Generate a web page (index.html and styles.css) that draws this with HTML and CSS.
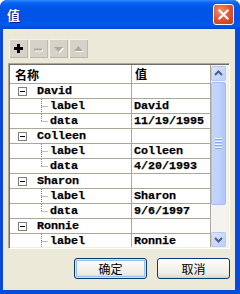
FILE: index.html
```html
<!DOCTYPE html>
<html>
<head>
<meta charset="utf-8">
<link rel="stylesheet" href="styles.css">
</head>
<body>
<div class="window">
  <div class="titlebar">
    <span class="title">值</span>
    <div class="close">
      <svg width="21" height="21" viewBox="0 0 21 21"><path d="M6 6 L15 15 M15 6 L6 15" stroke="#fff" stroke-width="2.4" stroke-linecap="square"/></svg>
    </div>
  </div>
  <div class="body">
    <div class="toolbar">
      <div class="tbtn"><svg width="19" height="19" viewBox="0 0 19 19"><path d="M5 9.5 H14 M9.5 5 V14" stroke="#000" stroke-width="3"/></svg></div>
      <div class="tbtn"><svg width="19" height="19" viewBox="0 0 19 19"><path d="M6 11.5 H14" stroke="#fff" stroke-width="2"/><path d="M5 10.5 H13" stroke="#ACA899" stroke-width="2"/></svg></div>
      <div class="tbtn"><svg width="19" height="19" viewBox="0 0 19 19"><path d="M6 9 L15 9 L10.5 14 Z" fill="#fff"/><path d="M5 8 L14 8 L9.5 13 Z" fill="#ACA899"/></svg></div>
      <div class="tbtn"><svg width="19" height="19" viewBox="0 0 19 19"><path d="M6 13 L15 13 L10.5 8 Z" fill="#fff"/><path d="M5 12 L14 12 L9.5 7 Z" fill="#ACA899"/></svg></div>
    </div>
    <div class="table">
      <div class="grid">
        <div class="row head"><div class="c1">名称</div><div class="c2">值</div></div>
        <div class="row"><div class="c1"><span class="box"></span>David</div><div class="c2"></div></div>
        <div class="row child"><div class="c1"><svg class="tree" width="8" height="14"><path d="M0.5 0 V14 M0.5 7.5 H7" stroke="#808080" stroke-dasharray="1 1"/></svg>label</div><div class="c2">David</div></div>
        <div class="row child"><div class="c1"><svg class="tree" width="8" height="14"><path d="M0.5 0 V7 M0.5 7.5 H7" stroke="#808080" stroke-dasharray="1 1"/></svg>data</div><div class="c2">11/19/1995</div></div>
        <div class="row"><div class="c1"><span class="box"></span>Colleen</div><div class="c2"></div></div>
        <div class="row child"><div class="c1"><svg class="tree" width="8" height="14"><path d="M0.5 0 V14 M0.5 7.5 H7" stroke="#808080" stroke-dasharray="1 1"/></svg>label</div><div class="c2">Colleen</div></div>
        <div class="row child"><div class="c1"><svg class="tree" width="8" height="14"><path d="M0.5 0 V7 M0.5 7.5 H7" stroke="#808080" stroke-dasharray="1 1"/></svg>data</div><div class="c2">4/20/1993</div></div>
        <div class="row"><div class="c1"><span class="box"></span>Sharon</div><div class="c2"></div></div>
        <div class="row child"><div class="c1"><svg class="tree" width="8" height="14"><path d="M0.5 0 V14 M0.5 7.5 H7" stroke="#808080" stroke-dasharray="1 1"/></svg>label</div><div class="c2">Sharon</div></div>
        <div class="row child"><div class="c1"><svg class="tree" width="8" height="14"><path d="M0.5 0 V7 M0.5 7.5 H7" stroke="#808080" stroke-dasharray="1 1"/></svg>data</div><div class="c2">9/6/1997</div></div>
        <div class="row"><div class="c1"><span class="box"></span>Ronnie</div><div class="c2"></div></div>
        <div class="row child"><div class="c1"><svg class="tree" width="8" height="14"><path d="M0.5 0 V14 M0.5 7.5 H7" stroke="#808080" stroke-dasharray="1 1"/></svg>label</div><div class="c2">Ronnie</div></div>
      </div>
      <div class="scrollbar">
        <div class="sbtn"><svg width="15" height="15" viewBox="0 0 15 15"><path d="M4 9 L7.5 5.5 L11 9" stroke="#4D6185" stroke-width="2" fill="none"/></svg></div>
        <div class="thumb"><span class="grip"></span><span class="grip"></span><span class="grip"></span><span class="grip"></span></div>
        <div class="track"></div>
        <div class="sbtn"><svg width="15" height="15" viewBox="0 0 15 15"><path d="M4 6 L7.5 9.5 L11 6" stroke="#4D6185" stroke-width="2" fill="none"/></svg></div>
      </div>
    </div>
    <div class="buttons">
      <div class="btn default"><span>确定</span></div>
      <div class="btn"><span>取消</span></div>
    </div>
  </div>
</div>
</body>
</html>
```
FILE: styles.css
```css
html, body { margin: 0; padding: 0; background: #fff; }
.window {
  width: 240px; height: 294px;
  background: #0A4ADB;
  border-radius: 7px 7px 0 0;
  display: flex; flex-direction: column;
  box-sizing: border-box;
  overflow: hidden;
}
.titlebar {
  height: 29px; flex: none;
  background: linear-gradient(to bottom, #2E8BFF 0px, #0A62F0 3px, #0055E8 8px, #0053E6 18px, #0059EE 25px, #0046D5 29px);
  display: flex; align-items: center;
  padding-left: 7px; padding-right: 5px;
}
.title {
  color: #fff; font: bold 13px "Noto Sans CJK SC", sans-serif;
  text-shadow: 1px 1px 0 #0A1883;
  flex: 1; margin-top: -1px;
}
.close {
  width: 19px; height: 19px;
  border: 1px solid #fff; border-radius: 3px;
  background: radial-gradient(circle at 35% 30%, #F3906E, #E0502E 55%, #C53A17);
  display: flex; align-items: center; justify-content: center;
  margin-top: -1px; margin-right: 1px;
}
.close svg { display: block; width: 19px; height: 19px; }
.body {
  flex: 1;
  margin: 0 5px 4px 3px;
  background: #ECE9D8;
  padding: 10px 5px 0 5px;
  display: flex; flex-direction: column;
}
.toolbar { display: flex; gap: 1px; margin-left: 1px; height: 19px; }
.tbtn {
  width: 19px; height: 19px;
  background: #D6D2CA;
  box-shadow: inset 1px 1px 0 #F4F2EC, inset -1px -1px 0 #BDB8AC;
}
.tbtn svg { display: block; }
.table {
  margin-top: 5px;
  height: 186px; box-sizing: border-box;
  border: 1px solid; border-color: #ACA899 #fff #fff #ACA899;
  box-shadow: inset 1px 1px 0 #716F64, inset -1px -1px 0 #F1EFE2;
  padding: 1px;
  display: flex; overflow: hidden;
  background: #fff;
}
.grid { width: 202px; overflow: hidden; background: #fff; }
.row {
  display: flex; height: 14px;
  border-bottom: 1px solid #ACA899;
  font: bold 11.7px "Liberation Mono", monospace;
  -webkit-text-stroke: 0.25px #000;
  line-height: 14px; color: #000;
}
.row.head {
  height: 18px; line-height: 18px;
  font: bold 12px "Noto Sans CJK SC", sans-serif;
  -webkit-text-stroke: 0;
}
.c1 {
  width: 122px; flex: none;
  border-right: 1px solid #ACA899;
  display: flex; align-items: center;
  padding-left: 8px; box-sizing: border-box;
  white-space: nowrap; overflow: hidden;
}
.c2 {
  flex: 1; padding-left: 2px;
  border-right: 1px solid #ACA899;
  white-space: nowrap; overflow: hidden;
}
.head .c1 { padding-left: 5px; }
.head .c2 { padding-left: 3px; }
.child .c1 { padding-left: 31px; }
.tree { display: block; margin-right: 1px; flex: none; }
.box {
  width: 7px; height: 7px; flex: none;
  border: 1px solid #808080; background: #fff;
  margin-right: 10px;
  display: flex; align-items: center; justify-content: center;
}
.box::before { content: ""; width: 5px; height: 1px; background: #000; }
.scrollbar {
  width: 16px; flex: none;
  background: #F4F3EE;
  display: flex; flex-direction: column;
  padding: 1px 1px 0 0;
}
.sbtn {
  width: 15px; height: 15px;
  border-radius: 2px;
  background: linear-gradient(135deg, #DCE6FE, #B9CDF9);
  box-shadow: inset 0 0 0 1px #B6C9F4;
}
.sbtn svg { display: block; }
.thumb {
  width: 13px; height: 121px; margin: 1px 0 0 0;
  border: 1px solid #A6BEF3; border-radius: 2px;
  background: linear-gradient(to right, #C6D6FC, #BCD0FA 60%, #AFC5F6);
  display: flex; flex-direction: column; align-items: center; justify-content: center; gap: 1px;
}
.grip { width: 7px; height: 1px; background: #EEF4FE; box-shadow: 0 1px 0 #8CA8E8; margin-bottom: 1px; }
.track { flex: 1; }
.buttons {
  display: flex; justify-content: flex-end; gap: 10px;
  margin-top: 9px;
}
.btn {
  width: 71px; height: 19px;
  border: 1px solid #003C74; border-radius: 3px;
  background: linear-gradient(to bottom, #FFFFFF 0%, #F5F4EF 40%, #ECEBE5 80%, #D8D2C6 100%);
  display: flex; align-items: center; justify-content: center;
  color: #000;
}
.btn span { font: 12px/14px "Noto Sans CJK SC", sans-serif; }
.btn.default {
  box-shadow: inset 0 0 0 1px #CDE5FD, inset 0 0 0 2px #9CBDEF;
}
```
